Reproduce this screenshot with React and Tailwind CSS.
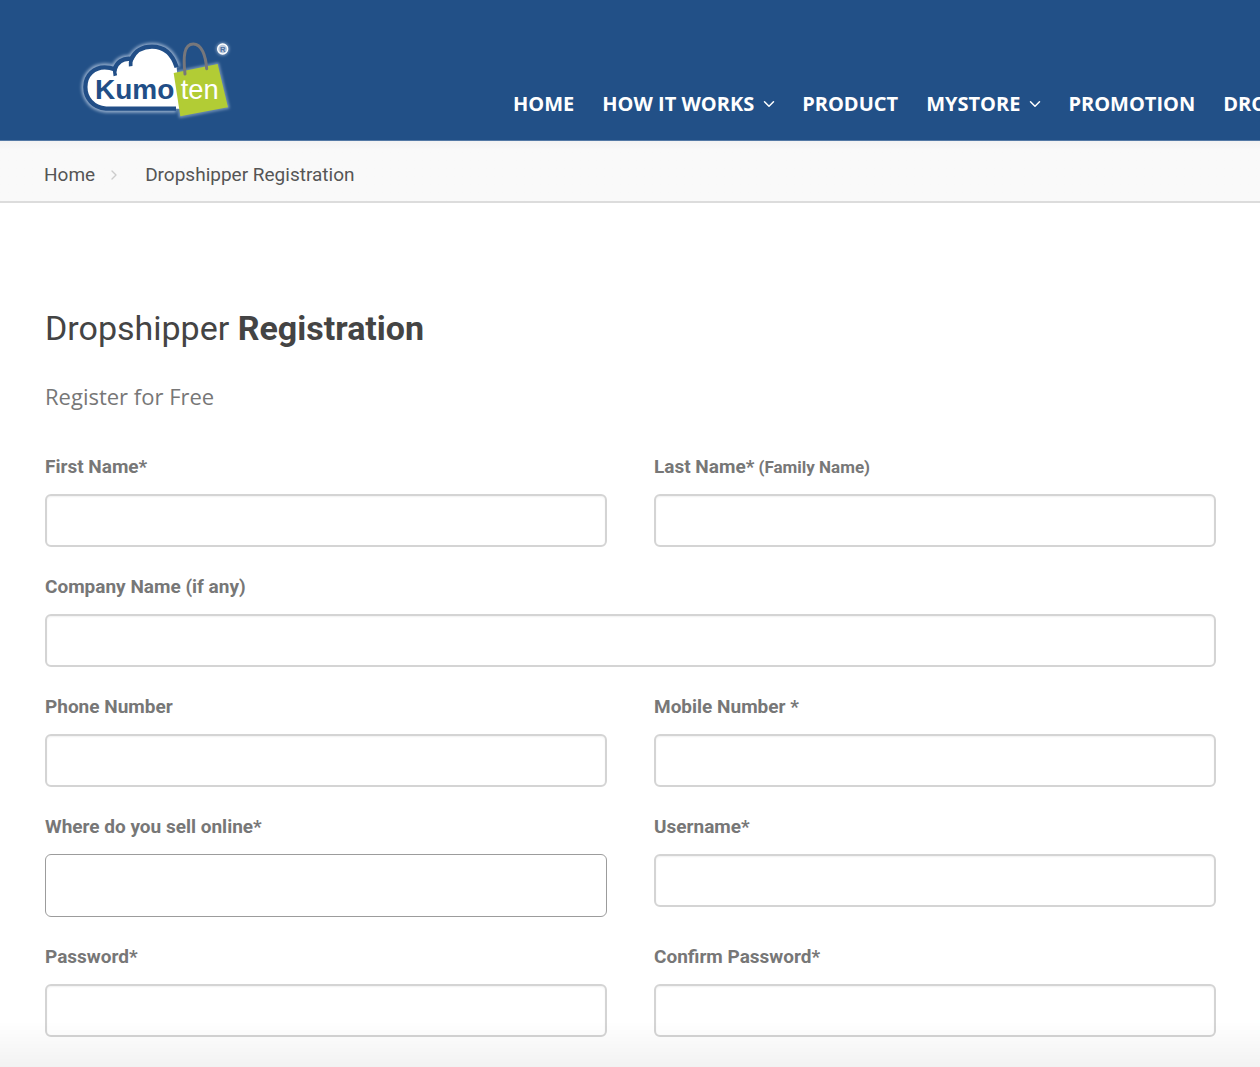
import { useState } from "react";
import { ChevronDown, ChevronRight } from "lucide-react";

const menu = [
  { label: "HOME" },
  { label: "HOW IT WORKS", dropdown: true },
  { label: "PRODUCT" },
  { label: "MYSTORE", dropdown: true },
  { label: "PROMOTION" },
  { label: "DROPSHIPPER" },
];

const fields = [
  { name: "firstName", label: "First Name*" },
  { name: "lastName", label: "Last Name*", note: "(Family Name)" },
  { name: "company", label: "Company Name (if any)", wide: true },
  { name: "phone", label: "Phone Number", type: "tel" },
  { name: "mobile", label: "Mobile Number *", type: "tel" },
  { name: "sellOnline", label: "Where do you sell online*", multiline: true },
  { name: "username", label: "Username*" },
  { name: "password", label: "Password*", type: "password" },
  { name: "confirmPassword", label: "Confirm Password*", type: "password" },
];

const cloud =
  "M318 236 H108 C68 232 46 204 46 171 C46 134 74 112 104 112 Q120 112 134 118 C140 98 158 83 184 87 C196 62 220 50 246 50 C284 50 308 74 320 112";

function Logo() {
  return (
    <svg viewBox="0 0 525 300" className="w-[175px] h-[100px]" role="img" aria-label="Kumoten">
      <defs>
        <filter id="glow" x="-20%" y="-20%" width="140%" height="140%">
          <feGaussianBlur stdDeviation="4" />
        </filter>
      </defs>
      {/* light halo round the cloud, the bag and the mark */}
      <g filter="url(#glow)" fill="none" stroke="#dbe6f5" strokeOpacity="0.6">
        <path d={cloud} strokeWidth="24" />
        <path d="M311 129 L443 102 L474 232 L331 259 Z" strokeWidth="7" />
        <circle cx="458" cy="57" r="15" strokeWidth="8" />
      </g>
      <path d={cloud + " L330 236 Z"} fill="#fff" />
      <path d={cloud} fill="none" stroke="#214e87" strokeWidth="13" />
      {/* inner ends of the two upper puffs */}
      <path d="M136 112 Q132 124 136 137 M186 84 Q180 96 182 109" fill="none" stroke="#214e87" strokeWidth="11" />
      <text x="75" y="208" fontFamily="Liberation Sans, Arial, sans-serif" fontWeight="700" fontSize="84" fill="#214e87">Kumo</text>
      <path d="M311 129 L443 102 L474 232 L331 259 Z" fill="#b2cc35" />
      <path d="M345 132 C339 80 342 42 370 42 C395 42 407 77 410 116" fill="none" stroke="#77777b" strokeWidth="9" strokeLinecap="round" />
      <text x="332" y="207" fontFamily="Liberation Sans, Arial, sans-serif" fontSize="82" fill="#fff">ten</text>
      <circle cx="458" cy="57" r="15" fill="#b9c8dc" stroke="#fff" strokeWidth="4" />
      <text x="458" y="65" textAnchor="middle" fontFamily="Liberation Sans, Arial, sans-serif" fontWeight="700" fontSize="23" fill="#4b6f9f">R</text>
    </svg>
  );
}

function Header() {
  return (
    <header className="h-[141px] pl-[70px] pt-[30px] flex items-start overflow-hidden bg-[#225087] border-b border-[#5479a5]">
      <a href="#home" className="w-[443px] shrink-0">
        <Logo />
      </a>
      <nav className="pt-[60px] flex gap-7 whitespace-nowrap font-['Open_Sans',sans-serif] text-[20px] leading-[28px] font-bold text-white">
        {menu.map((item) => (
          <a key={item.label} href="#menu" className="flex items-center gap-1.5">
            {item.label}
            {item.dropdown && <ChevronDown className="w-[18px] h-[18px] -mr-1" strokeWidth={2} />}
          </a>
        ))}
      </nav>
    </header>
  );
}

function Field({ field, value, onChange }) {
  return (
    <div className={field.wide ? "col-span-2" : ""}>
      <label htmlFor={field.name} className="block mb-[14px] text-[19px] leading-[27px] font-bold text-[#777777]">
        {field.label}
        {field.note && <span className="text-[17px] leading-none"> {field.note}</span>}
      </label>
      {field.multiline ? (
        <textarea id={field.name} name={field.name} value={value} onChange={onChange} className="block w-full h-[63px] px-4 py-3 resize-none rounded-[6px] border border-[#9c9c9c] bg-white" />
      ) : (
        <input id={field.name} name={field.name} type={field.type || "text"} value={value} onChange={onChange} className="block w-full h-[53px] px-4 rounded-[6px] border-2 border-[#d4d4d4] bg-white shadow-[inset_0_1px_2px_rgba(0,0,0,0.06)]" />
      )}
    </div>
  );
}

export default function App() {
  const [values, setValues] = useState({});

  const handleChange = (e) => {
    setValues({ ...values, [e.target.name]: e.target.value });
  };

  return (
    <div className="min-h-screen bg-white font-[Roboto,sans-serif]">
      <Header />
      <div className="h-[62px] px-[44px] pt-2 flex items-center border-b-2 border-[#dcdcdc] bg-linear-to-b from-[#f3f3f3] to-[#f9f9f9] to-15% text-[19px] leading-[28px] text-[#555555]">
        <a href="#home">Home</a>
        <ChevronRight className="w-4 h-4 ml-[11px] mr-[23px] text-[#cccccc]" strokeWidth={2} />
        <span>Dropshipper Registration</span>
      </div>
      <main className="pl-[45px] pr-[44px] pt-[102px] pb-[30px]">
        <h1 className="text-[34px] leading-[46px] text-[#444444]">
          Dropshipper <strong className="font-bold">Registration</strong>
        </h1>
        <p className="mt-[30px] font-['Open_Sans',sans-serif] text-[22px] leading-[30px] text-[#777777]">Register for Free</p>
        <form className="mt-[42px] grid grid-cols-2 gap-x-[47px] gap-y-[26px]">
          {fields.map((field) => (
            <Field key={field.name} field={field} value={values[field.name] || ""} onChange={handleChange} />
          ))}
        </form>
      </main>
      <div className="fixed inset-x-0 bottom-0 h-[46px] pointer-events-none bg-linear-to-b from-black/0 to-black/5" />
    </div>
  );
}
